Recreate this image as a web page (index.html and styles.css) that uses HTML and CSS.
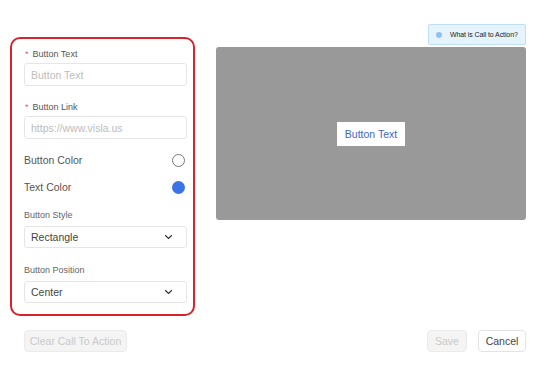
FILE: index.html
```html
<!DOCTYPE html>
<html lang="en">
    <head>
        <title>Call to Action</title>
        <link rel="stylesheet" href="styles.css">
    </head>
    <body>
        <main class="page">
            <div class="top">
                <form class="panel">
                    <label class="label"><span class="req">*</span>Button Text</label>
                    <input class="input" type="text" placeholder="Button Text">

                    <label class="label gap"><span class="req">*</span>Button Link</label>
                    <input class="input" type="text" placeholder="https://www.visla.us">

                    <div class="color-row first">
                        <span>Button Color</span>
                        <span class="swatch white"></span>
                    </div>
                    <div class="color-row">
                        <span>Text Color</span>
                        <span class="swatch blue"></span>
                    </div>

                    <label class="label plain">Button Style</label>
                    <div class="select">
                        <span>Rectangle</span>
                        <svg width="9" height="6" viewBox="0 0 9 6"><path d="M1.2 1.2 L4.5 4.4 L7.8 1.2" fill="none" stroke="#333" stroke-width="1.2"/></svg>
                    </div>

                    <label class="label plain lower">Button Position</label>
                    <div class="select">
                        <span>Center</span>
                        <svg width="9" height="6" viewBox="0 0 9 6"><path d="M1.2 1.2 L4.5 4.4 L7.8 1.2" fill="none" stroke="#333" stroke-width="1.2"/></svg>
                    </div>
                </form>

                <div class="right">
                    <div class="hint"><span class="dot"></span>What is Call to Action?</div>
                    <div class="preview">
                        <div class="cta">Button Text</div>
                    </div>
                </div>
            </div>

            <div class="footer">
                <button class="btn disabled clear" disabled>Clear Call To Action</button>
                <div class="actions">
                    <button class="btn disabled save" disabled>Save</button>
                    <button class="btn cancel">Cancel</button>
                </div>
            </div>
        </main>
    </body>
</html>
```

FILE: styles.css
```css
body {
    margin: 0;
    background-color: white;
    font-family: "Liberation Sans", Arial, sans-serif;
}

.page {
    padding: 24px 24px 0 10px;
}

.top {
    display: flex;
    align-items: flex-start;
    gap: 21px;
}

.panel {
    box-sizing: border-box;
    width: 185px;
    height: 279px;
    margin-top: 13px;
    border: 2px solid #d8222c;
    border-radius: 10px;
    padding: 9px 6px 0 12px;
    display: flex;
    flex-direction: column;
}

.label {
    font-size: 9px;
    line-height: 12px;
    color: #555;
    margin-bottom: 3px;
}

.label.gap {
    margin-top: 15px;
}

.label.plain {
    margin-top: 13px;
    margin-bottom: 5px;
    color: #666;
}

.label.plain.lower {
    margin-top: 16px;
}

.req {
    color: #e06070;
    margin: 0 4px 0 1px;
}

.input {
    box-sizing: border-box;
    height: 23px;
    width: 163px;
    border: 1px solid #e6e6e6;
    border-radius: 3px;
    padding: 0 6px;
    font-family: "Liberation Sans", Arial, sans-serif;
    font-size: 10.5px;
    outline: none;
}

.input::placeholder {
    color: #bdbdbd;
}

.color-row {
    display: flex;
    justify-content: space-between;
    align-items: center;
    height: 18px;
    font-size: 10.5px;
    color: #555;
    width: 161px;
    margin-top: 9px;
}

.color-row.first {
    margin-top: 12px;
}

.swatch {
    box-sizing: border-box;
    width: 13px;
    height: 13px;
    border-radius: 50%;
}

.swatch.white {
    border: 1px solid #777;
    background-color: white;
}

.swatch.blue {
    background-color: #3b74e8;
}

.select {
    box-sizing: border-box;
    height: 22px;
    width: 163px;
    border: 1px solid #e6e6e6;
    border-radius: 3px;
    padding: 0 13px 0 6px;
    display: flex;
    align-items: center;
    justify-content: space-between;
    font-size: 10.5px;
    color: #444;
}

.right {
    width: 310px;
    display: flex;
    flex-direction: column;
    align-items: flex-end;
}

.hint {
    box-sizing: border-box;
    height: 21px;
    width: 98px;
    margin-bottom: 2px;
    background-color: #e5f3fc;
    border: 1px solid #bfe0f4;
    border-radius: 2px;
    display: flex;
    align-items: center;
    padding-left: 7px;
    font-size: 7px;
    letter-spacing: -0.1px;
    color: #222;
    white-space: nowrap;
}

.dot {
    width: 6px;
    height: 6px;
    border-radius: 50%;
    background-color: #8fc3ec;
    margin-right: 8px;
}

.preview {
    width: 100%;
    height: 173px;
    background-color: #999999;
    border-radius: 3px;
    display: flex;
    align-items: center;
    justify-content: center;
}

.cta {
    width: 68px;
    height: 24px;
    background-color: white;
    color: #4066c2;
    font-size: 10.5px;
    display: flex;
    align-items: center;
    justify-content: center;
}

.footer {
    display: flex;
    justify-content: space-between;
    margin: 14px 0 0 14px;
}

.actions {
    display: flex;
    gap: 11px;
}

.btn {
    box-sizing: border-box;
    height: 22px;
    padding: 0;
    border: 1px solid #e3e3e3;
    border-radius: 4px;
    background-color: white;
    color: #444;
    font-family: "Liberation Sans", Arial, sans-serif;
    font-size: 10.5px;
    white-space: nowrap;
}

.btn.disabled {
    background-color: #f4f4f4;
    color: #c9c9c9;
    border-color: #ebebeb;
}

.btn.clear {
    width: 103px;
}

.btn.save {
    width: 40px;
}

.btn.cancel {
    width: 48px;
}
```
